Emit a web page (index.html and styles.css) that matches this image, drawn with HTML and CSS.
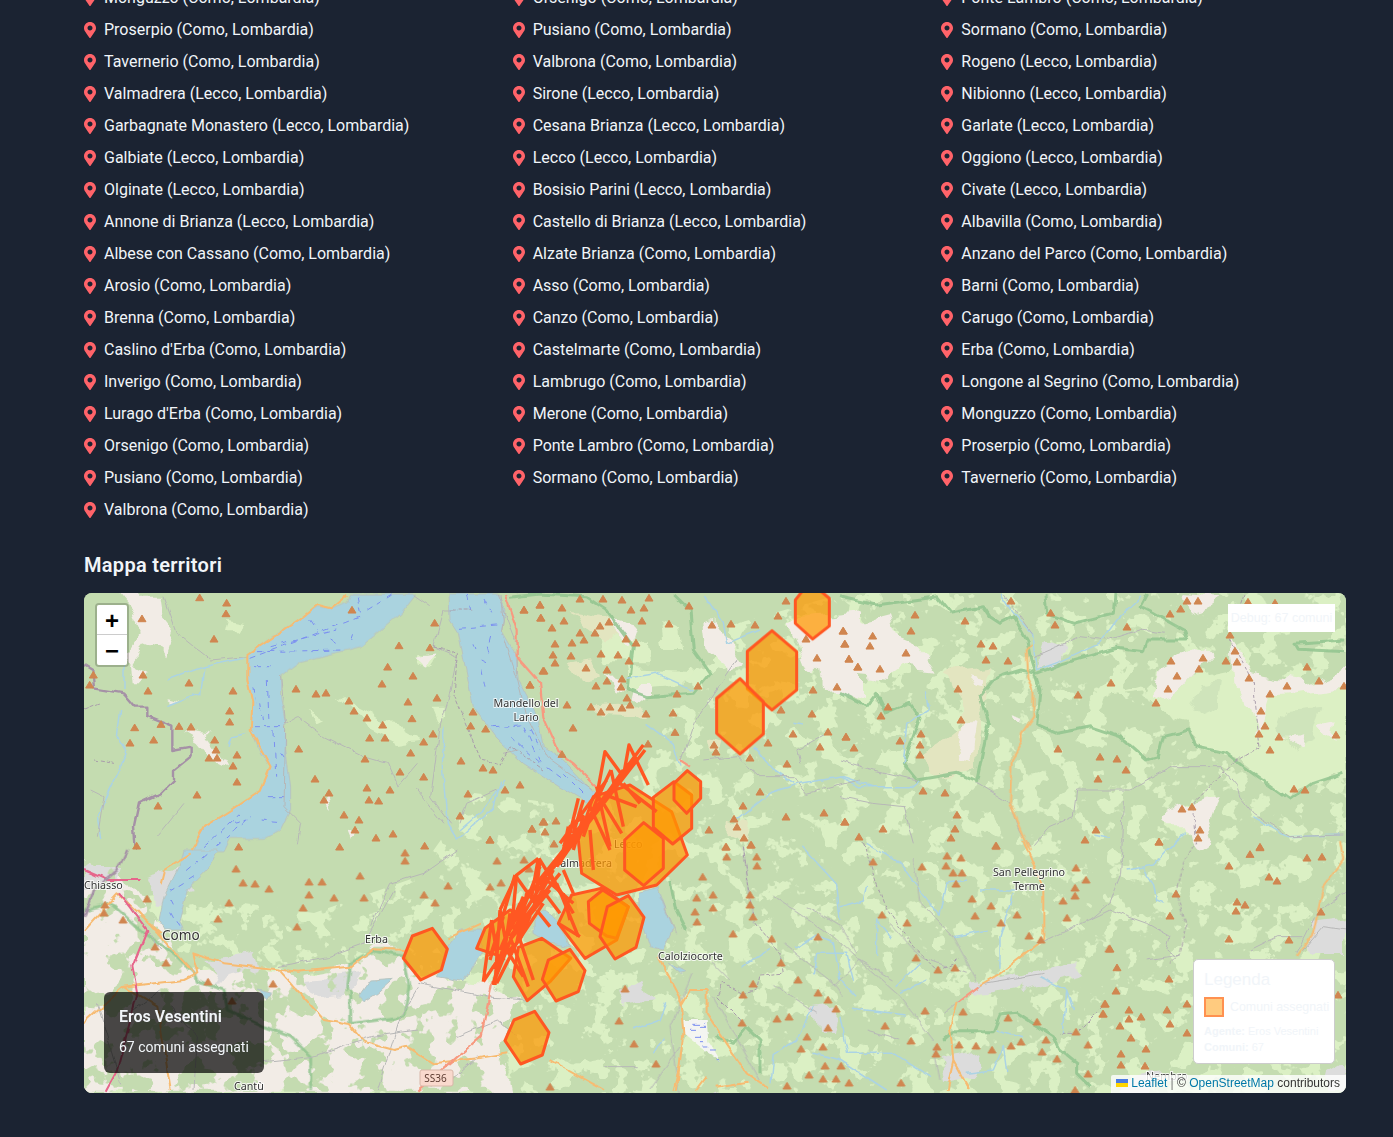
FILE: index.html
```html
<!DOCTYPE html>
<html lang="it">
<head>
<meta charset="utf-8">
<title>Mappa territori</title>
<link rel="stylesheet" href="styles.css">
</head>
<body>
<svg class="defs" width="0" height="0"><symbol id="pin" viewBox="0 0 384 512"><path d="M172.268 501.67C26.97 291.031 0 269.413 0 192 0 85.961 85.961 0 192 0s192 85.961 192 192c0 77.413-26.97 99.031-172.268 309.67-9.535 13.774-29.93 13.773-39.464 0zM192 272c44.183 0 80-35.817 80-80s-35.817-80-80-80-80 35.817-80 80 35.817 80 80 80z"/></symbol></svg>
<main class="page">
<ul class="towns">
<li><svg class="pin"><use href="#pin"/></svg>Monguzzo (Como, Lombardia)</li><li><svg class="pin"><use href="#pin"/></svg>Orsenigo (Como, Lombardia)</li><li><svg class="pin"><use href="#pin"/></svg>Ponte Lambro (Como, Lombardia)</li>
<li><svg class="pin"><use href="#pin"/></svg>Proserpio (Como, Lombardia)</li><li><svg class="pin"><use href="#pin"/></svg>Pusiano (Como, Lombardia)</li><li><svg class="pin"><use href="#pin"/></svg>Sormano (Como, Lombardia)</li>
<li><svg class="pin"><use href="#pin"/></svg>Tavernerio (Como, Lombardia)</li><li><svg class="pin"><use href="#pin"/></svg>Valbrona (Como, Lombardia)</li><li><svg class="pin"><use href="#pin"/></svg>Rogeno (Lecco, Lombardia)</li>
<li><svg class="pin"><use href="#pin"/></svg>Valmadrera (Lecco, Lombardia)</li><li><svg class="pin"><use href="#pin"/></svg>Sirone (Lecco, Lombardia)</li><li><svg class="pin"><use href="#pin"/></svg>Nibionno (Lecco, Lombardia)</li>
<li><svg class="pin"><use href="#pin"/></svg>Garbagnate Monastero (Lecco, Lombardia)</li><li><svg class="pin"><use href="#pin"/></svg>Cesana Brianza (Lecco, Lombardia)</li><li><svg class="pin"><use href="#pin"/></svg>Garlate (Lecco, Lombardia)</li>
<li><svg class="pin"><use href="#pin"/></svg>Galbiate (Lecco, Lombardia)</li><li><svg class="pin"><use href="#pin"/></svg>Lecco (Lecco, Lombardia)</li><li><svg class="pin"><use href="#pin"/></svg>Oggiono (Lecco, Lombardia)</li>
<li><svg class="pin"><use href="#pin"/></svg>Olginate (Lecco, Lombardia)</li><li><svg class="pin"><use href="#pin"/></svg>Bosisio Parini (Lecco, Lombardia)</li><li><svg class="pin"><use href="#pin"/></svg>Civate (Lecco, Lombardia)</li>
<li><svg class="pin"><use href="#pin"/></svg>Annone di Brianza (Lecco, Lombardia)</li><li><svg class="pin"><use href="#pin"/></svg>Castello di Brianza (Lecco, Lombardia)</li><li><svg class="pin"><use href="#pin"/></svg>Albavilla (Como, Lombardia)</li>
<li><svg class="pin"><use href="#pin"/></svg>Albese con Cassano (Como, Lombardia)</li><li><svg class="pin"><use href="#pin"/></svg>Alzate Brianza (Como, Lombardia)</li><li><svg class="pin"><use href="#pin"/></svg>Anzano del Parco (Como, Lombardia)</li>
<li><svg class="pin"><use href="#pin"/></svg>Arosio (Como, Lombardia)</li><li><svg class="pin"><use href="#pin"/></svg>Asso (Como, Lombardia)</li><li><svg class="pin"><use href="#pin"/></svg>Barni (Como, Lombardia)</li>
<li><svg class="pin"><use href="#pin"/></svg>Brenna (Como, Lombardia)</li><li><svg class="pin"><use href="#pin"/></svg>Canzo (Como, Lombardia)</li><li><svg class="pin"><use href="#pin"/></svg>Carugo (Como, Lombardia)</li>
<li><svg class="pin"><use href="#pin"/></svg>Caslino d'Erba (Como, Lombardia)</li><li><svg class="pin"><use href="#pin"/></svg>Castelmarte (Como, Lombardia)</li><li><svg class="pin"><use href="#pin"/></svg>Erba (Como, Lombardia)</li>
<li><svg class="pin"><use href="#pin"/></svg>Inverigo (Como, Lombardia)</li><li><svg class="pin"><use href="#pin"/></svg>Lambrugo (Como, Lombardia)</li><li><svg class="pin"><use href="#pin"/></svg>Longone al Segrino (Como, Lombardia)</li>
<li><svg class="pin"><use href="#pin"/></svg>Lurago d'Erba (Como, Lombardia)</li><li><svg class="pin"><use href="#pin"/></svg>Merone (Como, Lombardia)</li><li><svg class="pin"><use href="#pin"/></svg>Monguzzo (Como, Lombardia)</li>
<li><svg class="pin"><use href="#pin"/></svg>Orsenigo (Como, Lombardia)</li><li><svg class="pin"><use href="#pin"/></svg>Ponte Lambro (Como, Lombardia)</li><li><svg class="pin"><use href="#pin"/></svg>Proserpio (Como, Lombardia)</li>
<li><svg class="pin"><use href="#pin"/></svg>Pusiano (Como, Lombardia)</li><li><svg class="pin"><use href="#pin"/></svg>Sormano (Como, Lombardia)</li><li><svg class="pin"><use href="#pin"/></svg>Tavernerio (Como, Lombardia)</li>
<li><svg class="pin"><use href="#pin"/></svg>Valbrona (Como, Lombardia)</li>
</ul>
<h2 class="map-title">Mappa territori</h2>
<section class="map">
<svg class="tiles" viewBox="0 0 1262 500" preserveAspectRatio="none">
<defs>
<filter id="mottle" x="0" y="0" width="100%" height="100%" color-interpolation-filters="sRGB"><feTurbulence type="fractalNoise" baseFrequency=".045" numOctaves="4" seed="7"/><feColorMatrix values="0 0 0 0 .86  0 0 0 0 .94  0 0 0 0 .77  30 0 0 0 -16.8"/></filter>
<filter id="mottle3" x="0" y="0" width="100%" height="100%" color-interpolation-filters="sRGB"><feTurbulence type="fractalNoise" baseFrequency=".04" numOctaves="4" seed="12"/><feColorMatrix values="0 0 0 0 .77  0 0 0 0 .86  0 0 0 0 .69  30 0 0 0 -16"/></filter>
<filter id="rough" filterUnits="userSpaceOnUse" x="0" y="0" width="1262" height="500" color-interpolation-filters="sRGB"><feTurbulence type="fractalNoise" baseFrequency=".035" numOctaves="3" seed="4" result="n"/><feDisplacementMap in="SourceGraphic" in2="n" scale="22" xChannelSelector="R" yChannelSelector="G"/></filter>
<filter id="wiggle" filterUnits="userSpaceOnUse" x="0" y="0" width="1262" height="500" color-interpolation-filters="sRGB"><feTurbulence type="fractalNoise" baseFrequency=".07" numOctaves="2" seed="9" result="n"/><feDisplacementMap in="SourceGraphic" in2="n" scale="6" xChannelSelector="R" yChannelSelector="G"/></filter>
<clipPath id="mot-a"><path d="M0 310L90 300 230 320 330 285 390 200 470 210 560 180 620 40 760 0 1262 0 1262 500 0 500Z"/></clipPath>
<clipPath id="mot-v"><path transform="translate(0,257) scale(.33333)" d="M0 30L110 60 230 230 320 360 420 350 640 370 800 340 870 290 960 290 1000 380 1200 400 1290 450 1260 620 1280 725 0 725Z"/></clipPath>
</defs>
<rect class="land" width="1262" height="500"/>
<rect class="noise" width="1262" height="500" clip-path="url(#mot-a)" filter="url(#mottle)"/>
<g filter="url(#rough)">
<g transform="translate(0,-3) scale(.33333)">
<path class="meadow" d="M430 90L480 100 460 130 420 130ZM1010 190L1060 200 1040 230 1000 220ZM760 320L840 360 900 400 960 410 1010 440 940 450 840 400ZM1040 350L1080 350 1060 400ZM680 360L720 380 700 390Z"/>
<path class="bare" d="M100 14L220 14 230 80 270 130 250 190 180 160 140 210 130 190 170 130 140 60ZM135 205L200 240 170 280 140 280ZM240 330L280 340 260 345ZM300 420L370 430 440 530 400 510 350 450ZM720 630L750 660 740 620ZM830 720L810 745 800 720ZM1000 200L1060 190 1030 230Z"/>
</g>
<g transform="translate(376,-3) scale(.33333)">
<path class="meadow" d="M420 140L560 150 570 220 440 220ZM500 230L680 240 680 290 560 300 510 280ZM600 100L660 120 670 180 610 180Z"/>
<path class="scree" d="M330 60L450 80 520 130 440 170 360 110ZM320 200L400 190 420 260 360 270ZM390 350L540 340 570 380 420 375ZM730 450L790 460 780 500 740 490ZM800 680L870 700 860 770 800 740Z"/>
<path class="bare" d="M460 90L530 110 510 170 470 130ZM520 285L570 285 570 330 515 320ZM440 260L500 280 470 310ZM730 100L770 90 850 220 800 230 740 180ZM980 90L1200 70 1200 330 1120 300 1040 230 1000 130Z"/>
</g>
<g transform="translate(756,-3) scale(.33333)">
<path class="bare" d="M0 95L50 95 150 70 170 130 220 150 290 245 200 235 150 270 50 260 0 280ZM950 680L1040 640 1130 620 1110 700 1130 760 1070 780 1050 700 970 700ZM1030 12L1140 20 1130 60 1050 80Z"/>
<path class="meadow" d="M790 310L900 280 960 350 1000 400 1040 410 1065 460 1160 490 1210 525 1280 580 1350 630 1420 580 1515 545 1515 290 1290 310 1240 250 1200 180 1160 240 1060 260 1000 330 940 290Z"/>
<path class="patch" d="M1090 280L1140 270 1130 340 1060 370ZM1340 360L1450 350 1420 450 1350 480 1320 420Z"/>
<path class="bare" d="M960 240L1090 170 1120 200 1060 260 1000 330 940 300ZM1170 140L1240 250 1400 280 1515 235 1515 290 1290 315 1270 380 1250 450 1220 310 1180 270ZM1330 440L1390 430 1370 480ZM1440 410L1490 400 1480 460Z"/>
<path class="scree" d="M310 240L460 220 440 280 410 540 270 560 250 500 380 400 340 320Z"/>
<path class="bare" d="M400 250L430 260 420 285 390 280ZM380 400L410 400 390 510 350 500ZM500 370L535 380 530 395 505 385Z"/>
</g>
<path class="bare" transform="translate(0,257) scale(.33333)" d="M0 30L110 60 230 230 320 360 420 350 640 370 800 340 870 290 960 290 1000 380 1200 400 1290 450 1260 620 1280 725 0 725Z"/>
<path class="urban" d="M1226 330L1262 325 1262 362 1230 362ZM535 395L560 385 570 410 540 415ZM882 390L930 380 940 392 890 400ZM932 385L990 370 1000 382 940 398ZM732 415L755 412 750 440 735 440ZM855 465L900 455 890 485 860 490ZM952 75L975 72 980 55 960 50ZM1040 485L1075 480 1060 500 1030 500ZM60 285L100 275 110 300 70 310ZM120 365L170 360 175 375 130 385ZM220 385L280 380 270 400 230 405ZM0 270L40 270 30 300 0 300ZM620 510L640 500 650 500 640 530ZM1245 480L1262 470 1262 500 1240 500Z"/>
</g>
<rect class="noise" width="1262" height="500" clip-path="url(#mot-v)" filter="url(#mottle3)"/>
<g filter="url(#wiggle)">
<g class="park" transform="translate(756,-3) scale(.33333)">
<path d="M0 20L110 45 290 20 330 70 430 50 450 80 480 100 520 80 560 150 575 220 600 300 590 405 650 430 750 410 840 440 920 510 955 500 970 440 1050 420 1070 470 1160 490 1210 530 1280 580 1350 630 1420 580 1510 550"/>
<path d="M590 250L670 220 830 175 910 185 920 150 1040 150 1030 120 940 70 900 50 920 12"/>
<path d="M615 12L620 70 700 100 820 70 825 12"/>
<path d="M460 270L420 320 445 400 410 575 350 550 230 570 190 520 240 385 210 340 140 370 110 310 80 350 0 310"/>
<path d="M590 250L540 240 490 255 460 270"/>
<path d="M1515 150L1365 160 1375 178 1515 185"/>
</g>
<g class="park" transform="translate(376,-3) scale(.33333)">
<path d="M150 22L240 12 380 20 440 60 520 170 510 240 505 300 560 320 700 310 750 250 700 180 690 60 640 12"/>
</g>
<g class="park" transform="translate(516,247) scale(.33333)">
<path d="M210 120L225 200 260 270M350 590L400 610 440 560 480 600 480 700M1030 600L1060 575 1180 575 1200 525 1250 520 1360 590 1380 630 1430 670 1430 700 1475 745"/>
</g>
<g class="park" transform="translate(0,257) scale(.33333)">
<path d="M0 180L80 160 180 250 270 310 330 370 340 395 420 420 430 480 540 530 620 560 680 620 680 720M790 420L800 340 870 300 960 320 975 410 960 500 800 520 800 420"/>
</g>
<g class="water" transform="translate(0,-3) scale(.33333)">
<path d="M800 12L995 12 950 70 880 130 830 170 750 190 650 215 590 260 590 320 605 400 605 480 620 590 620 660 590 720 545 745 440 745 420 785 325 785 360 710 440 660 530 600 560 530 530 490 500 420 505 340 490 270 490 195 580 130 650 85 700 50 740 55 790 35Z"/>
</g>
<g class="water" transform="translate(376,-3) scale(.33333)">
<path d="M-33 12L115 12 135 60 125 120 168 195 175 270 230 370 250 470 310 510 410 615 385 640 300 590 190 520 107 440 40 350 -5 130 -30 90Z"/>
</g>
<g class="water" transform="translate(0,257) scale(.33333)">
<path d="M300 0L400 0 370 60 310 120 285 215 295 240 240 240 225 215 240 140 285 50ZM1090 290L1130 240 1190 240 1195 310 1140 395 1060 380ZM825 440L860 390 930 385 880 430 840 455ZM520 420L565 430 550 450ZM1350 210L1375 180 1420 210 1460 290 1400 280 1350 250Z"/>
</g>
<g class="water" transform="translate(516,247) scale(.33333)">
<path d="M115 160L175 145 220 265 190 330 150 320 120 230ZM205 370L260 395 240 400Z"/>
<path class="marsh" d="M250 540L320 540 325 600 360 660 300 620 250 580Z"/>
</g>
<g class="flow" transform="translate(0,-3) scale(.33333)">
<path d="M500 205L830 80M520 185L780 180M560 170L760 120M680 90L700 120M820 20L830 75M850 60L920 15M740 150L755 160M800 150L810 120M510 230L560 230M550 270L555 400M510 290L515 340M530 340L540 400M510 410L605 410M570 420L575 560M590 490L605 510M550 620L610 620M450 700L490 690M530 690L590 695M360 770L470 670M400 770L500 680M1125 115L1240 105M1150 15L1160 60M1200 30L1220 70M1170 160L1180 190M1190 210L1210 220M1190 240L1200 290M1225 410L1310 405M1320 410L1370 520M1220 140L1215 160M1210 170L1215 190"/>
</g>
<g class="flow" transform="translate(376,-3) scale(.33333)">
<path d="M150 440L240 520M260 530L300 560M310 550L380 620M210 420L240 480"/>
</g>
<g class="flow" transform="translate(0,257) scale(.33333)">
<path d="M370 10L300 70M330 80L250 130M260 150L270 170M260 185L290 240"/>
</g>
<g class="flow" transform="translate(516,247) scale(.33333)">
<path d="M280 553H315M270 568H295M300 562H320M285 592H305M300 605H310M310 618H325M330 630H348M350 656H360"/>
</g>
<g class="river" transform="translate(516,247) scale(.33333)">
<path d="M425 380L510 325M585 325L650 285 700 305 720 420 770 470M640 400L650 340 740 340 760 420M720 200L790 180 800 140M720 240L710 130 610 20M830 350L830 240 880 300M890 440L960 370M900 460L980 420M1020 230L1040 130 1100 120M1060 290L1160 270M1200 380L1200 290 1240 160M1140 150L1250 150M755 505L920 525M590 600L640 500M510 730L520 640 590 600M640 640L720 660 860 750M720 530L740 640 880 640 990 710M1190 570L1270 590M1100 700L1180 690 1210 620 1220 690M1320 410L1400 450 1420 510M1400 450L1390 580M100 570L180 540 200 490M160 640L190 590M800 10L900 70 1020 230"/>
</g>
<g class="river" transform="translate(756,-3) scale(.33333)">
<path d="M480 12L520 70 575 130 590 240 660 215 780 160 830 90 900 20M255 300L265 360 200 400 190 520M0 560L60 590 210 590 235 570M1240 680L1340 740 1500 735M760 735L810 745M980 780L1040 725"/>
</g>
<g class="river" transform="translate(376,-3) scale(.33333)">
<path d="M500 265L590 250 700 300M560 400L640 460 660 530M830 690L930 610 1020 580 1150 560 1240 590M880 470L940 540 1000 580M730 12L790 100 800 160 900 120M1000 400L1035 405M0 720L70 660 135 570"/>
</g>
<g class="river" transform="translate(0,-3) scale(.33333)">
<path d="M250 350L350 310 360 230 250 270M360 230L480 205M120 225L120 300M110 360L100 440 130 490 40 680 50 750M1080 410L1075 530 1090 700 1120 750 1230 650 1250 575M435 470L445 440 490 430"/>
</g>
<g class="river" transform="translate(1006,247) scale(.33333)">
<path d="M110 90L190 75 260 0M160 85L190 130 200 180 225 190"/>
</g>
<g class="lane" transform="translate(1006,247) scale(.33333)">
<path d="M100 0L95 100 60 190 0 240M60 210L170 250 240 290 230 330 260 350M480 330L560 290 640 290M620 340L680 220 770 150M640 330L700 260 770 270M170 360L270 345"/>
</g>
<g class="lane" transform="translate(0,-3) scale(.33333)">
<path d="M590 260L605 400 640 380 720 440 840 500 910 520 940 590 1000 520M605 410L600 650 650 700 640 760M240 20L280 130 380 210 490 200M1090 340L1070 400 1040 620 1100 700M1090 340L1120 200 1050 170 1080 60 1100 60M1300 480L1260 490M990 15L1040 50M1240 12L1300 170 1300 250M1080 700L1000 600M40 740L60 620 20 600M220 740L300 640"/>
</g>
<g class="lane" transform="translate(376,-3) scale(.33333)">
<path d="M120 12L130 90 125 120 170 260 200 380 260 500 400 600M660 520L700 400 830 210M1020 520L1010 480 1100 430M730 510L830 500 900 560 1000 560 1040 610 1200 570M0 700L20 640 110 600"/>
</g>
<g class="lane" transform="translate(756,-3) scale(.33333)">
<path d="M0 510L100 540 230 570M410 580L510 640 540 720 570 770M580 770L630 710 700 680 710 600 870 600 1000 530 1140 530 1190 590 1200 620 1240 670 1350 740 1510 735M850 630L845 760M490 12L575 130M580 200L650 170 720 140 800 150 900 120 980 130M0 620L100 640 190 650 220 760"/>
</g>
<g class="lane" transform="translate(516,247) scale(.33333)">
<path d="M520 170L700 290 900 470 1000 600M430 20L460 250M550 310L700 430 730 470M870 250L960 350 1100 400M940 60L960 190 1060 290 1130 420M1320 310L1530 210M1030 520L1080 480 1150 430 1330 400M800 570L900 600M330 360L390 420M340 470L480 720M240 760L210 560 280 400M180 170L230 280M10 680L110 680M150 750L240 620M620 200L720 260 770 340M700 440L780 360 880 420M520 430L650 520M1000 620L1020 720"/>
</g>
<g class="lane" transform="translate(0,257) scale(.33333)">
<path d="M930 120L840 280 730 320 580 350M1000 400L1210 440M1000 415L950 500 880 720M1120 0L1020 70 920 100 860 230M1200 440L1330 450M540 635L680 620 860 560 1000 540M260 470L300 520 340 560 330 720M40 460L110 700M150 480L230 420M120 140L230 300M1120 560L1240 510 1300 560M1090 700L1180 620"/>
</g>
<g class="major" transform="translate(0,-3) scale(.33333)"><path d="M320 780L360 710 440 660 530 600 560 530 500 420 505 340 490 270 490 195 650 85 700 45 740 55 790 14"/></g>
<g class="major" transform="translate(0,257) scale(.33333)"><path d="M0 520L120 410 300 390 340 370 325 310 420 340 640 365 800 350 870 295 960 300M590 365L720 510 800 525 840 575 930 600 970 590 1050 640 1180 625 1270 610M1400 630L1560 720M1090 265L1190 220M230 100L240 60 320 10M0 240L100 130 230 250M160 180L330 370M120 410L220 470 260 720"/></g>
<g class="major" transform="translate(756,-3) scale(.33333)"><path d="M575 165L560 180 565 265 580 300 580 380 545 430 545 460 515 510 510 640 540 710 570 780"/></g>
<g class="major" transform="translate(516,247) scale(.33333)"><path d="M175 350L240 470 250 580 230 750M320 450H270L240 500M320 450L320 520 440 700 505 745M350 740L440 725M290 750L320 710M220 750L240 670M1270 0L1330 150 1330 300 1200 400 1140 435M1070 485L1050 560 1060 660 1110 750M1040 750L1060 660"/></g>
<g class="major" transform="translate(1006,247) scale(.33333)"><path d="M750 0L760 60 700 140 670 280 620 350"/></g>
<path class="salmon" transform="translate(376,-3) scale(.33333)" d="M135 12L170 120 170 200 240 280 250 380 300 490 340 520 410 590M660 510L690 530"/>
<path class="salmon" transform="translate(0,257) scale(.33333)" d="M1000 725L1190 560 1225 400"/>
<path class="salmon thin" transform="translate(516,247) scale(.33333)" d="M1075 485L1135 440"/>
<path class="motorway" transform="translate(0,257) scale(.33333)" d="M105 130L190 240 145 350 160 430 100 660 65 725M0 60L70 90 170 90"/>
<g class="border" transform="translate(0,-3) scale(.33333)"><path d="M0 225L25 240 30 295 120 310 155 350 190 350 190 380 265 410 265 480 320 470 320 500 270 540 270 570 230 610 165 640 150 710 155 780"/></g>
<g class="border" transform="translate(0,257) scale(.33333)"><path d="M130 0L100 60 30 120 0 200"/></g>
<g class="admin" transform="translate(0,-3) scale(.33333)">
<path d="M1100 60H1165M1050 170L1120 190 1110 320 1190 510 1250 525 1280 470 1380 540M0 360L50 340M30 510L90 520"/>
</g>
<g class="admin" transform="translate(756,-3) scale(.33333)">
<path d="M1215 12L1170 140 1240 280 1260 470 1180 520 1060 640 1070 760"/>
</g>
<g class="admin" transform="translate(516,247) scale(.33333)">
<path d="M430 20L460 240 540 340 550 400 480 405 470 450 430 465 370 430 350 470 430 550M790 10L850 190 940 320 1010 390 1080 360M1510 500L1430 580 1380 580"/>
</g>
<g class="admin" transform="translate(1006,247) scale(.33333)">
<path d="M320 0L280 70 260 160 290 260 270 340 240 370"/>
</g>
</g>
<g class="peaks" transform="translate(0,-6.3) scale(.33333)">
<path d="M347 22l12 20h-24zM428 38l12 20h-24zM426 70l12 20h-24zM174 85l12 20h-24zM390 146l12 20h-24zM804 59l12 20h-24zM1052 98l12 20h-24zM945 166l12 20h-24zM1038 172l12 20h-24zM911 230l12 20h-24zM987 257l12 20h-24zM894 281l12 20h-24zM177 254l12 20h-24zM28 254l12 20h-24zM17 284l12 20h-24zM315 278l12 20h-24zM192 302l12 20h-24zM447 302l12 20h-24zM636 296l12 20h-24zM696 311l12 20h-24zM726 308l12 20h-24zM795 332l12 20h-24zM972 335l12 20h-24zM1059 323l12 20h-24zM437 362l12 20h-24zM810 362l12 20h-24zM849 383l12 20h-24zM437 395l12 20h-24zM984 385l12 20h-24zM896 404l12 20h-24zM1167 365l12 20h-24zM1160 407l12 20h-24zM1205 416l12 20h-24zM152 412l12 20h-24zM231 402l12 20h-24zM285 408l12 20h-24zM321 410l12 20h-24zM857 443l12 20h-24zM903 443l12 20h-24zM1047 431l12 20h-24zM1019 455l12 20h-24zM392 449l12 20h-24zM209 449l12 20h-24zM138 458l12 20h-24zM644 476l12 20h-24zM980 488l12 20h-24zM396 479l12 20h-24zM459 494l12 20h-24zM375 503l12 20h-24zM399 503l12 20h-24zM843 506l12 20h-24zM1131 512l12 20h-24zM1197 533l12 20h-24zM1227 539l12 20h-24zM447 527l12 20h-24zM948 545l12 20h-24zM1019 560l12 20h-24zM693 566l12 20h-24zM459 575l12 20h-24zM849 593l12 20h-24zM1263 599l12 20h-24zM1308 584l12 20h-24zM918 599l12 20h-24zM339 614l12 20h-24zM1152 611l12 20h-24zM735 608l12 20h-24zM720 629l12 20h-24zM855 629l12 20h-24zM884 632l12 20h-24zM222 647l12 20h-24zM780 674l12 20h-24zM1128 677l12 20h-24zM825 689l12 20h-24zM813 719l12 20h-24zM1344 716l12 20h-24zM876 743l12 20h-24zM927 731l12 20h-24zM1218 749l12 20h-24zM158 767l12 20h-24zM464 770l12 20h-24zM767 770l12 20h-24zM1022 767l12 20h-24zM1320 59l12 20h-24zM1368 44l12 20h-24zM1370 83l12 20h-24zM1338 284l12 20h-24zM1377 242l12 20h-24zM1377 695l12 20h-24z"/>
</g>
<g class="peaks" transform="translate(376,-6.3) scale(.33333)">
<path d="M240 44l12 20h-24zM192 59l12 20h-24zM306 53l12 20h-24zM360 26l12 20h-24zM429 26l12 20h-24zM486 29l12 20h-24zM567 23l12 20h-24zM243 83l12 20h-24zM312 92l12 20h-24zM513 59l12 20h-24zM552 53l12 20h-24zM546 92l12 20h-24zM447 95l12 20h-24zM420 107l12 20h-24zM276 113l12 20h-24zM360 128l12 20h-24zM405 128l12 20h-24zM372 149l12 20h-24zM285 161l12 20h-24zM336 158l12 20h-24zM498 146l12 20h-24zM528 158l12 20h-24zM627 101l12 20h-24zM279 194l12 20h-24zM333 197l12 20h-24zM423 191l12 20h-24zM474 194l12 20h-24zM285 218l12 20h-24zM507 212l12 20h-24zM252 242l12 20h-24zM378 233l12 20h-24zM441 239l12 20h-24zM486 266l12 20h-24zM441 272l12 20h-24zM210 284l12 20h-24zM408 287l12 20h-24zM483 290l12 20h-24zM501 323l12 20h-24zM510 344l12 20h-24zM321 344l12 20h-24zM393 350l12 20h-24zM450 350l12 20h-24zM486 353l12 20h-24zM423 365l12 20h-24zM558 371l12 20h-24zM639 368l12 20h-24zM339 413l12 20h-24zM645 426l12 20h-24zM564 461l12 20h-24zM306 492l12 20h-24zM762 464l12 20h-24zM768 485l12 20h-24zM870 503l12 20h-24zM981 521l12 20h-24zM900 605l12 20h-24zM849 647l12 20h-24zM1092 668l12 20h-24zM978 680l12 20h-24zM1155 695l12 20h-24zM822 686l12 20h-24zM831 710l12 20h-24zM852 743l12 20h-24zM747 719l12 20h-24zM873 764l12 20h-24zM798 770l12 20h-24zM756 104l12 20h-24zM813 101l12 20h-24zM885 104l12 20h-24zM978 32l12 20h-24zM954 77l12 20h-24zM687 47l12 20h-24zM651 311l12 20h-24zM714 287l12 20h-24zM1149 122l12 20h-24zM1155 161l12 20h-24zM1071 203l12 20h-24zM1167 206l12 20h-24zM1131 290l12 20h-24zM1059 299l12 20h-24zM963 359l12 20h-24zM1056 371l12 20h-24zM999 431l12 20h-24zM924 458l12 20h-24zM1104 425l12 20h-24zM1158 440l12 20h-24zM1080 470l12 20h-24zM1193 230l12 20h-24zM1038 146l12 20h-24zM252 695l12 20h-24zM288 692l12 20h-24zM216 716l12 20h-24zM255 725l12 20h-24zM90 749l12 20h-24zM282 761l12 20h-24z"/>
</g>
<g class="peaks" transform="translate(756,-6.3) scale(.33333)">
<path d="M513 32l12 20h-24zM632 68l12 20h-24zM645 104l12 20h-24zM225 74l12 20h-24zM375 92l12 20h-24zM213 122l12 20h-24zM10 122l12 20h-24zM98 137l12 20h-24zM14 161l12 20h-24zM90 167l12 20h-24zM423 161l12 20h-24zM459 167l12 20h-24zM198 188l12 20h-24zM861 110l12 20h-24zM990 71l12 20h-24zM1041 32l12 20h-24zM1074 32l12 20h-24zM1022 56l12 20h-24zM1224 35l12 20h-24zM1305 38l12 20h-24zM1170 134l12 20h-24zM1185 182l12 20h-24zM27 206l12 20h-24zM54 230l12 20h-24zM120 236l12 20h-24zM438 209l12 20h-24zM504 212l12 20h-24zM993 212l12 20h-24zM1089 203l12 20h-24zM1158 212l12 20h-24zM1191 215l12 20h-24zM1077 236l12 20h-24zM1401 230l12 20h-24zM1011 257l12 20h-24zM1227 263l12 20h-24zM1437 272l12 20h-24zM1341 287l12 20h-24zM813 278l12 20h-24zM354 296l12 20h-24zM984 296l12 20h-24zM1290 311l12 20h-24zM1512 287l12 20h-24zM714 314l12 20h-24zM948 338l12 20h-24zM144 350l12 20h-24zM123 377l12 20h-24zM363 389l12 20h-24zM1263 362l12 20h-24zM1275 407l12 20h-24zM1257 431l12 20h-24zM1317 440l12 20h-24zM1488 434l12 20h-24zM243 431l12 20h-24zM18 440l12 20h-24zM180 452l12 20h-24zM240 464l12 20h-24zM42 473l12 20h-24zM240 494l12 20h-24zM654 476l12 20h-24zM1290 479l12 20h-24zM780 500l12 20h-24zM831 506l12 20h-24zM858 539l12 20h-24zM774 566l12 20h-24zM1362 596l12 20h-24zM1395 599l12 20h-24zM249 602l12 20h-24zM315 608l12 20h-24zM1026 656l12 20h-24zM1056 650l12 20h-24zM351 674l12 20h-24zM14 695l12 20h-24zM129 716l12 20h-24zM345 716l12 20h-24zM768 719l12 20h-24zM1080 719l12 20h-24zM57 740l12 20h-24zM333 743l12 20h-24zM735 749l12 20h-24zM957 755l12 20h-24zM1074 743l12 20h-24zM468 767l12 20h-24zM1260 770l12 20h-24z"/>
</g>
<g class="peaks" transform="translate(516,243.7) scale(.33333)">
<path d="M378 20l12 20h-24zM453 14l12 20h-24zM380 50l12 20h-24zM470 50l12 20h-24zM471 77l12 20h-24zM308 110l12 20h-24zM290 173l12 20h-24zM339 164l12 20h-24zM339 203l12 20h-24zM285 215l12 20h-24zM291 245l12 20h-24zM450 164l12 20h-24zM450 194l12 20h-24zM459 230l12 20h-24zM399 281l12 20h-24zM515 296l12 20h-24zM543 368l12 20h-24zM594 419l12 20h-24zM459 431l12 20h-24zM429 464l12 20h-24zM75 446l12 20h-24zM57 542l12 20h-24zM102 611l12 20h-24zM168 671l12 20h-24zM426 548l12 20h-24zM654 290l12 20h-24zM654 458l12 20h-24zM684 479l12 20h-24zM708 506l12 20h-24zM531 536l12 20h-24zM567 530l12 20h-24zM684 563l12 20h-24zM621 590l12 20h-24zM669 620l12 20h-24zM603 626l12 20h-24zM675 677l12 20h-24zM723 677l12 20h-24zM627 704l12 20h-24zM669 716l12 20h-24zM708 716l12 20h-24zM747 728l12 20h-24zM561 737l12 20h-24zM819 65l12 20h-24zM966 80l12 20h-24zM1041 47l12 20h-24zM1083 53l12 20h-24zM1188 17l12 20h-24zM1038 77l12 20h-24zM1059 98l12 20h-24zM1086 98l12 20h-24zM1068 131l12 20h-24zM1428 83l12 20h-24zM1458 119l12 20h-24zM1425 143l12 20h-24zM1425 167l12 20h-24zM1389 182l12 20h-24zM1116 176l12 20h-24zM1173 197l12 20h-24zM846 224l12 20h-24zM921 248l12 20h-24zM1125 227l12 20h-24zM1203 248l12 20h-24zM1251 224l12 20h-24zM1401 233l12 20h-24zM1287 287l12 20h-24zM1323 299l12 20h-24zM948 353l12 20h-24zM1014 389l12 20h-24zM1065 383l12 20h-24zM975 512l12 20h-24zM1089 515l12 20h-24zM855 557l12 20h-24zM933 602l12 20h-24zM1011 620l12 20h-24zM1008 641l12 20h-24zM1077 614l12 20h-24zM1128 617l12 20h-24zM1176 629l12 20h-24zM1233 617l12 20h-24zM1263 605l12 20h-24zM1224 533l12 20h-24zM1311 545l12 20h-24zM1338 599l12 20h-24zM1326 635l12 20h-24zM1371 656l12 20h-24zM1428 575l12 20h-24zM1464 614l12 20h-24zM1509 521l12 20h-24zM1515 491l12 20h-24zM1464 701l12 20h-24zM1425 749l12 20h-24zM903 728l12 20h-24zM1527 326l12 20h-24z"/>
</g>
<g class="peaks" transform="translate(0,253.7) scale(.33333)">
<path d="M456 56l12 20h-24zM477 98l12 20h-24zM513 101l12 20h-24zM555 116l12 20h-24zM675 95l12 20h-24zM714 95l12 20h-24zM828 77l12 20h-24zM675 134l12 20h-24zM750 143l12 20h-24zM840 143l12 20h-24zM963 8l12 20h-24zM963 32l12 20h-24zM1239 32l12 20h-24zM1320 29l12 20h-24zM1092 107l12 20h-24zM1020 134l12 20h-24zM1053 158l12 20h-24zM1218 110l12 20h-24zM1251 98l12 20h-24zM1335 56l12 20h-24zM1374 89l12 20h-24zM435 158l12 20h-24zM657 173l12 20h-24zM402 206l12 20h-24zM639 230l12 20h-24zM189 146l12 20h-24zM63 164l12 20h-24zM60 188l12 20h-24zM117 209l12 20h-24zM213 290l12 20h-24zM246 338l12 20h-24zM372 395l12 20h-24zM567 401l12 20h-24zM444 452l12 20h-24zM1398 710l12 20h-24z"/>
</g>
<g class="peaks" transform="translate(1016,353.7) scale(.33333)">
<path d="M51 52l12 20h-24zM207 86l12 20h-24zM48 122l12 20h-24zM15 161l12 20h-24zM261 161l12 20h-24zM9 191l12 20h-24zM87 179l12 20h-24zM201 179l12 20h-24zM87 206l12 20h-24zM123 200l12 20h-24zM60 227l12 20h-24zM210 221l12 20h-24zM93 263l12 20h-24zM261 248l12 20h-24zM138 296l12 20h-24zM63 311l12 20h-24zM63 344l12 20h-24zM135 347l12 20h-24zM714 134l12 20h-24z"/>
</g>
<g class="peaks" transform="translate(1006,243.7) scale(.33333)">
<path d="M207 5l12 20h-24zM510 22l12 20h-24zM480 42l12 20h-24zM651 53l12 20h-24zM696 50l12 20h-24zM417 77l12 20h-24zM537 110l12 20h-24zM561 122l12 20h-24zM258 161l12 20h-24zM441 185l12 20h-24zM465 194l12 20h-24zM438 212l12 20h-24zM240 227l12 20h-24zM693 215l12 20h-24zM417 296l12 20h-24zM597 299l12 20h-24zM60 326l12 20h-24z"/>
</g>
<g class="labels">
<text class="big" x="78" y="347">Como</text>
<text x="281" y="350">Erba</text>
<text x="442" y="114" text-anchor="middle">Mandello del</text>
<text x="442" y="128" text-anchor="middle">Lario</text>
<text x="0" y="296">Chiasso</text>
<text x="574" y="367">Calolziocorte</text>
<text x="945" y="283" text-anchor="middle">San Pellegrino</text>
<text x="945" y="297" text-anchor="middle">Terme</text>
<text x="150" y="497">Cantù</text>
<text x="1062" y="487">Nembro</text>
<text x="470" y="274">Valmadrera</text>
<text x="530" y="255">Lecco</text>
</g>
<g class="shield"><rect x="336" y="477" width="33" height="16" rx="2"/><text x="351.5" y="489" text-anchor="middle">SS36</text></g>
<g class="terr" transform="translate(376,-3) scale(.33333)">
<path d="M1006 100L1058 147 1108 108 1108 25 1078 0 1030 0 1006 30Z"/>
<path d="M936 122L1010 185 1010 300 936 360 862 296 862 184Z"/>
<path d="M840 266L910 335 910 432 840 492 770 430 770 325Z"/>
</g>
<g class="terr" transform="translate(366,147) scale(.33333)">
<path d="M430 170L540 135 665 215 712 345 620 435 500 465 395 400 385 300Z"/>
<path d="M672 125L725 165 725 265 668 312 610 262 610 172Z"/>
<path d="M712 92L752 125 752 175 710 220 672 180 672 130Z"/>
<path d="M581 248L640 295 640 385 581 437 524 390 524 300Z"/>
</g>
<g class="terr" transform="translate(386,267) scale(.33333)">
<path d="M265 190L305 105 395 85 475 140 440 240 345 295Z"/>
<path d="M398 90L475 140 440 235 410 228 358 190 355 125Z"/>
<path d="M412 140L475 107 522 172 498 262 435 297 390 230Z"/>
<path d="M145 262L215 235 302 295 240 365 172 422 130 350Z"/>
<path d="M235 300L300 268 345 332 325 395 258 423 217 358Z"/>
<path d="M20 265L45 205 120 150 180 170 150 240 95 290Z"/>
</g>
<g class="terr" transform="translate(0,257) scale(.33333)">
<path d="M1045 235L1090 297 1072 360 1010 390 958 325 985 258Z"/>
<path d="M1352 484L1395 548 1375 615 1310 642 1263 572 1290 510Z"/>
</g>
<g class="spikes" transform="translate(366,147) scale(.33333)">
<path d="M385 175L345 340 330 370 360 260 400 230 370 330M440 170L465 35 520 110 537 15 595 135M585 30L360 320 280 410M580 15L380 280 260 430M560 50L340 350 240 460M520 90L320 380M483 90L520 260M483 90L440 180 400 290M510 130L620 215M480 170L560 200M440 140L480 320M420 200L480 330M460 190L515 280M420 270L430 390M520 130L570 190M265 355L200 405 150 510M267 355L350 490M300 400L370 520M320 430L385 590M340 390L370 460M500 130L340 320M470 120L330 310M355 260L340 330M400 180L370 280M265 355L245 470M200 405L190 510"/>
</g>
<g class="spikes" transform="translate(386,267) scale(.33333)">
<path d="M135 45L195 130 210 0M135 45L80 230 60 300M90 150L110 260 40 365M65 180L80 280M130 150L70 370 210 20M195 130L130 270 80 370M250 30L190 140 120 230M210 80L270 160M230 60L310 130M200 150L240 200M120 230L175 380M150 240L190 360M110 270L160 350M265 190L330 230M300 180L280 100M100 170L60 290M170 100L140 250M270 40L150 190M240 90L120 240M230 50L130 210M180 90L100 250M150 130L90 270M220 130L120 280M90 150L75 375M65 180L40 365M120 160L100 300M160 110L130 180"/>
</g>
</svg>
<div class="zoom-ctl"><button class="zoom-btn">+</button><button class="zoom-btn">−</button></div>
<div class="debug">Debug: 67 comuni</div>
<div class="agent"><div class="agent-name">Eros Vesentini</div><div class="agent-count">67 comuni assegnati</div></div>
<div class="legend">
<div class="legend-title">Legenda</div>
<div class="legend-row"><span class="swatch"></span><span>Comuni assegnati</span></div>
<div class="legend-meta"><b>Agente:</b> Eros Vesentini</div>
<div class="legend-meta"><b>Comuni:</b> 67</div>
</div>
<div class="attrib"><svg class="flag" viewBox="0 0 12 8"><rect width="12" height="4" fill="#4c7be1"/><rect y="4" width="12" height="4" fill="#ffd500"/></svg> <a>Leaflet</a> <span class="sep">|</span> © <a>OpenStreetMap</a> contributors</div>
</section>
</main>
</body>
</html>
```

FILE: styles.css
```css
html,body{margin:0;padding:0;background:#1b2332;}
body{font-family:Roboto,"Noto Sans",sans-serif;color:#f1f5f9;}
.defs{position:absolute;}
.page{margin:-14px 47px 0 84px;padding-bottom:44px;}
.towns{list-style:none;margin:0;padding:0;display:grid;grid-template-columns:repeat(3,1fr);column-gap:24px;row-gap:8px;}
.towns li{display:flex;align-items:center;height:24px;font-size:16px;line-height:24px;white-space:nowrap;}
.pin{width:12px;height:16px;margin-right:8px;fill:#ff6369;flex:none;}
.map-title{margin:29px 0 14px;font-size:20px;line-height:28px;font-weight:600;letter-spacing:.3px;color:#f1f5f9;}
.map{position:relative;height:500px;border-radius:8px;overflow:hidden;background:#c5dcb1;}
.tiles{display:block;width:100%;height:100%;}
.land{fill:#c4dcb0;}
.noise{fill:#dcf0c6;}
.meadow{fill:#dcf0c4;}
.patch{fill:#cfe4bb;}
.bare{fill:#f2ece6;}
.urban{fill:#dcdcdc;}
.scree{fill:#e3e5c0;}
.park path{fill:none;stroke:#92c48f;stroke-width:3;stroke-opacity:.85;stroke-linejoin:round;vector-effect:non-scaling-stroke;}
.water path{fill:#aad3df;stroke:#b8c4c0;stroke-width:1;vector-effect:non-scaling-stroke;}
.water .marsh{fill:#f4f5f1;stroke:none;}
.flow path{fill:none;stroke:#7b8ff0;stroke-width:1;stroke-dasharray:6 5;vector-effect:non-scaling-stroke;}
.river path{fill:none;stroke:#abd3e4;stroke-width:1.5;stroke-linejoin:round;vector-effect:non-scaling-stroke;}
.lane path{fill:none;stroke:#b7b7b7;stroke-width:1;stroke-linejoin:round;vector-effect:non-scaling-stroke;}
.major path{fill:none;stroke:#f7bb72;stroke-width:2;stroke-linejoin:round;vector-effect:non-scaling-stroke;}
.salmon{fill:none;stroke:#f79a80;stroke-width:2.2;stroke-linejoin:round;vector-effect:non-scaling-stroke;}
.salmon.thin{stroke-width:2;}
.motorway{fill:none;stroke:#e6658b;stroke-width:2;stroke-linejoin:round;vector-effect:non-scaling-stroke;}
.border path{fill:none;stroke:#a591a6;stroke-width:2.4;stroke-linejoin:round;vector-effect:non-scaling-stroke;}
.admin path{fill:none;stroke:#a99dab;stroke-width:1;stroke-dasharray:4 2;vector-effect:non-scaling-stroke;}
.peaks path{fill:#d08650;stroke:#d08650;stroke-width:1;vector-effect:non-scaling-stroke;}
.labels text{font:10.7px "Noto Sans",sans-serif;fill:#333;paint-order:stroke;stroke:#fff;stroke-width:2px;stroke-opacity:.8;}
.labels .big{font-size:13.6px;}
.shield rect{fill:#f9d9cd;stroke:#d8b6a8;}
.shield text{font:10px "Noto Sans",sans-serif;fill:#5c3a30;}
.terr path{fill:#ff9800;fill-opacity:.72;stroke:#ff5722;stroke-width:3;stroke-linejoin:round;vector-effect:non-scaling-stroke;}
.spikes path{fill:none;stroke:#ff5722;stroke-width:3.4;stroke-linejoin:round;vector-effect:non-scaling-stroke;}
.zoom-ctl{position:absolute;left:11px;top:10px;width:30px;border:2px solid rgba(0,0,0,.2);border-radius:4px;display:flex;flex-direction:column;background-clip:padding-box;}
.zoom-btn{width:30px;height:30px;padding:2px 0 0;border:0;border-bottom:1px solid #ccc;background:#fff;font:bold 24px/28px "Liberation Sans",Arial,sans-serif;color:#000;}
.zoom-btn:first-child{border-radius:2px 2px 0 0;}
.zoom-btn:last-child{border-bottom:0;border-radius:0 0 2px 2px;}
.debug{position:absolute;right:11px;top:11px;width:107px;height:28px;box-sizing:border-box;background:#fff;font:12.5px/28px "Liberation Sans",Arial,sans-serif;color:#f1f5f9;text-align:center;white-space:nowrap;}
.agent{position:absolute;left:20px;bottom:20px;width:160px;height:81px;box-sizing:border-box;padding:15px;background:rgba(0,0,0,.7);border-radius:6px;color:#f1f5f9;}
.agent-name{font-size:16px;line-height:19px;font-weight:600;margin-bottom:11px;}
.agent-count{font-size:14px;line-height:20px;white-space:nowrap;}
.legend{position:absolute;right:11px;bottom:29px;width:142px;height:105px;box-sizing:border-box;padding:10px;background:#fff;border:1px solid #ccc;border-radius:5px;font-family:"Liberation Sans",Arial,sans-serif;color:#f1f5f9;}
.legend-title{font-size:17px;line-height:20px;margin-bottom:7px;}
.legend-row{display:flex;align-items:center;gap:6px;font-size:12.4px;height:20px;margin-bottom:6px;white-space:nowrap;}
.swatch{width:16px;height:16px;border:2px solid rgba(255,87,34,.5);background:rgba(255,152,0,.5);flex:none;}
.legend-meta{font-size:11px;line-height:16px;white-space:nowrap;}
.attrib{position:absolute;right:0;bottom:0;height:18px;padding:0 6px 0 5px;background:rgba(255,255,255,.8);font:12px/16px "Liberation Sans",Arial,sans-serif;color:#333;white-space:nowrap;border-top-left-radius:2px;}
.attrib a{color:#0078a8;}
.flag{width:12px;height:8px;}
.sep{color:#777;}
```
